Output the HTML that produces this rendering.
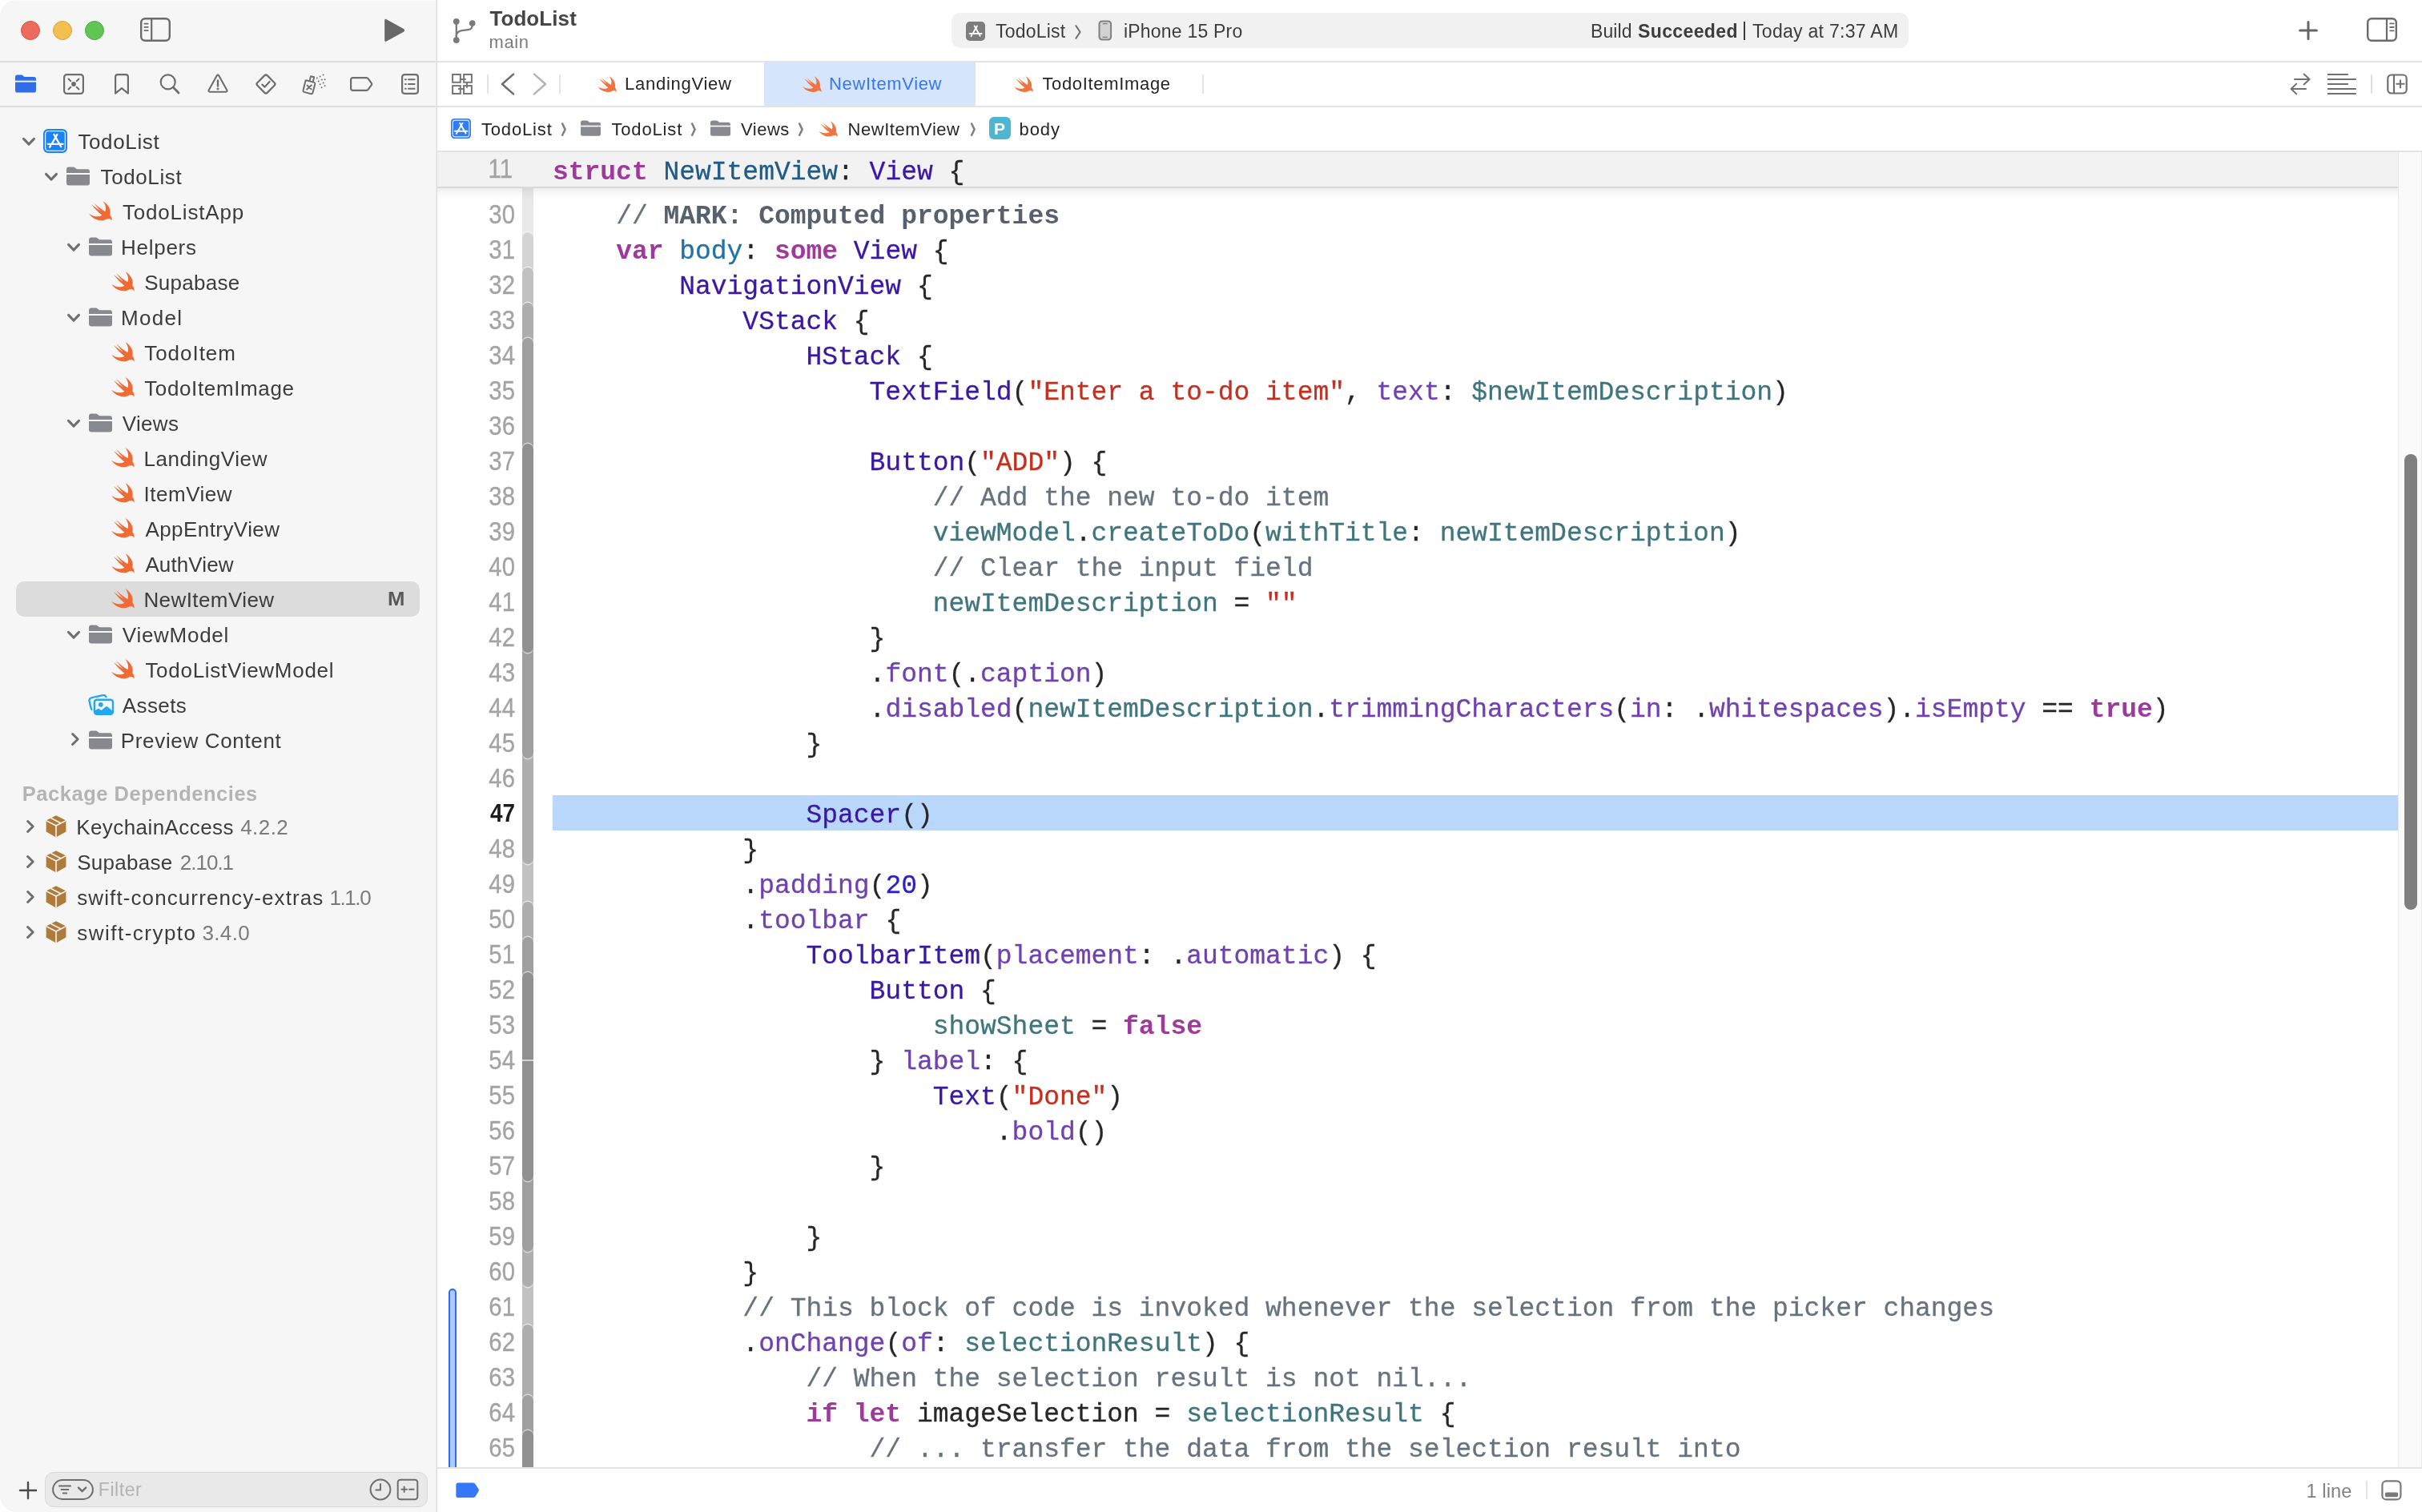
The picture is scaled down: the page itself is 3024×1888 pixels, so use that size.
<!DOCTYPE html><html lang="en"><head><meta charset="utf-8"><title>TodoList — NewItemView.swift</title><style>
*{box-sizing:border-box;margin:0;padding:0}
html,body{width:3024px;height:1888px;background:#fff}
body{font-family:"Liberation Sans",sans-serif;color:#3a3a3a;position:relative}
.a{position:absolute}
.t{white-space:pre;line-height:1}
#side{left:0;top:0;width:544px;height:1888px;background:#f6f6f6;border-radius:20px 0 0 20px}
#sdiv{left:544px;top:0;width:2px;height:1888px;background:linear-gradient(90deg,#ebebeb 50%,#dedede 50%)}
.hl{height:2px;background:#e3e3e3}
.sb{font-size:26px;color:#3c3c3c}
.ver{color:#7b7b7b}
.tab{font-size:22px;color:#262626}
.jb{font-size:22px;color:#262626}
.tb{font-size:23px;color:#3c3c3c}
.code{font-family:"Liberation Mono",monospace;font-size:33px;letter-spacing:-0.024px;color:#262626;-webkit-text-stroke:0.3px;height:44px;line-height:44px;left:690px}
.ln{font-family:"Liberation Sans",sans-serif;font-size:32.6px;transform:scaleX(.9);transform-origin:100% 50%;-webkit-text-stroke:0.35px;color:#a3a3a3;height:44px;line-height:44px;left:560px;width:83px;text-align:right}
.k{color:#9e3a9c;font-weight:bold;-webkit-text-stroke:0}.ty{color:#1f5b85}.d{color:#2272a6}.s{color:#3b18a4}.f{color:#7042af}
.p{color:#3f757d}.st{color:#c4301f}.n{color:#2a1fd0}.c{color:#65737f}.m{color:#56616d;font-weight:bold;-webkit-text-stroke:0}
</style></head><body><div id="win" class="a" style="left:0;top:0;width:3024px;height:1888px;overflow:hidden;will-change:transform">
<div id="side" class="a"></div><div id="sdiv" class="a"></div>
<div class="a" style="left:20px;top:0;width:524px;height:1px;background:#fbfbfb"></div>
<div class="a" style="left:26px;top:26px;width:24px;height:24px;border-radius:50%;background:#ed6a5e;border:1px solid #d5544a"></div>
<div class="a" style="left:66px;top:26px;width:24px;height:24px;border-radius:50%;background:#f5bf4f;border:1px solid #d9a33b"></div>
<div class="a" style="left:106px;top:26px;width:24px;height:24px;border-radius:50%;background:#61c554;border:1px solid #4faa42"></div>
<svg class="a" style="left:174px;top:21px" width="40" height="32" viewBox="0 0 40 32" ><rect x="2.2" y="2.2" width="35.6" height="27.6" rx="5" fill="none" stroke="#6b6b6b" stroke-width="2.4"/><path d="M15.2 2V30" stroke="#6b6b6b" stroke-width="2.2"/><path d="M6.4 8.6H10.8M6.4 12.9H10.8M6.4 17.2H10.8" stroke="#6b6b6b" stroke-width="1.7" stroke-linecap="round"/></svg>
<svg class="a" style="left:478px;top:22px" width="30" height="32" viewBox="0 0 30 32" ><path d="M2.2 3.6Q2.2 1 4.6 2.3L26 14Q28.4 15.9 26 17.8L4.6 29.6Q2.2 30.8 2.2 28.2Z" fill="#686868"/></svg>
<div class="a hl" style="left:0;top:76px;width:544px;background:#dcdcdc"></div>
<div class="a hl" style="left:0;top:132px;width:544px;background:#dcdcdc"></div>
<svg class="a" style="left:19px;top:93px" width="26" height="23" viewBox="0 0 29 24" preserveAspectRatio="none"><path fill="#2f6ee8" d="M0 3.6Q0 0.6 3 0.6H8.2Q9.8 0.6 10.9 1.6L12 2.6Q12.8 3.2 14 3.2H26Q29 3.2 29 6.2V20.6Q29 23.6 26 23.6H3Q0 23.6 0 20.6Z"/><rect x="0" y="8" width="29" height="2" fill="#f6f6f6"/></svg>
<svg class="a" style="left:79px;top:92px" width="26" height="26" viewBox="0 0 26 26" ><rect x="1.1" y="1.1" width="23.8" height="23.8" rx="3.5" fill="none" stroke="#6e6e6e" stroke-width="2.2"/><circle cx="13" cy="13" r="2.9" fill="#6e6e6e"/><path d="M6.5 6.5L9.3 9.3M19.5 6.5L16.7 9.3M6.5 19.5L9.3 16.7M19.5 19.5L16.7 16.7" stroke="#6e6e6e" stroke-width="2" stroke-linecap="round"/></svg>
<svg class="a" style="left:143px;top:92px" width="18" height="26" viewBox="0 0 18 26" ><path d="M1.1 4Q1.1 1.1 4 1.1H14Q16.9 1.1 16.9 4V24.6L9 18.2L1.1 24.6Z" fill="none" stroke="#6e6e6e" stroke-width="2.2" stroke-linejoin="round"/></svg>
<svg class="a" style="left:199px;top:92px" width="26" height="26" viewBox="0 0 26 26" ><circle cx="10.7" cy="10.4" r="9" fill="none" stroke="#6e6e6e" stroke-width="2.2"/><path d="M17.2 17L24 24" stroke="#6e6e6e" stroke-width="2.8" stroke-linecap="round"/></svg>
<svg class="a" style="left:259px;top:91px" width="26" height="26" viewBox="0 0 26 26" ><path d="M13 2.6Q13.8 2.6 14.3 3.5L24.3 21.4Q25.2 23.6 23 23.8H3Q0.8 23.6 1.7 21.4L11.7 3.5Q12.2 2.6 13 2.6Z" fill="none" stroke="#6e6e6e" stroke-width="2.1" stroke-linejoin="round"/><path d="M13 9.5V16.4" stroke="#6e6e6e" stroke-width="2.4" stroke-linecap="round"/><circle cx="13" cy="20" r="1.4" fill="#6e6e6e"/></svg>
<svg class="a" style="left:318px;top:91px" width="28" height="28" viewBox="0 0 28 28" ><rect x="5.2" y="5.2" width="17.6" height="17.6" rx="2.6" transform="rotate(45 14 14)" fill="none" stroke="#6e6e6e" stroke-width="2.2"/><path d="M9.4 14.6L12.6 17.6L18.6 11" fill="none" stroke="#6e6e6e" stroke-width="2.2" stroke-linecap="round" stroke-linejoin="round"/></svg>
<svg class="a" style="left:377px;top:91px" width="32" height="29" viewBox="0 0 32 29" ><g fill="none" stroke="#6e6e6e" stroke-width="2" stroke-linejoin="round"><path d="M5.2 9.3L15.2 11.9Q16.6 12.4 16.3 13.9L13.4 25.1Q12.9 26.5 11.5 26.2L2.6 23.9Q1.2 23.4 1.5 22L4.3 10.5Q4.5 9.2 5.2 9.3Z"/><path d="M9.6 9.8L11 4.2L15.2 5.3L13.8 10.9"/><path d="M6.6 15.6L11.6 20.4M11.8 15.4L6.2 20.6" stroke-linecap="round"/></g><g fill="#6e6e6e"><circle cx="18.8" cy="6.6" r="1"/><circle cx="22.6" cy="4.6" r="1"/><circle cx="26.6" cy="2.6" r="1"/><circle cx="20.8" cy="10.6" r="1"/><circle cx="24.8" cy="8.6" r="1"/><circle cx="28.6" cy="8.2" r="1"/><circle cx="22.6" cy="14.2" r="1"/><circle cx="26.6" cy="12.6" r="1"/><circle cx="24.6" cy="18.2" r="1"/><circle cx="28.6" cy="16.2" r="1"/></g></svg>
<svg class="a" style="left:436px;top:95px" width="32" height="20" viewBox="0 0 32 20" ><path d="M4.6 2.1H21.4Q22.9 2.1 23.8 3.4L28 9.2Q28.5 10 28 10.8L23.8 16.6Q22.9 17.9 21.4 17.9H4.6Q2.1 17.9 2.1 15.4V4.6Q2.1 2.1 4.6 2.1Z" fill="none" stroke="#6e6e6e" stroke-width="2.2" stroke-linejoin="round"/></svg>
<svg class="a" style="left:500px;top:92px" width="24" height="26" viewBox="0 0 24 26" ><rect x="2.1" y="1.2" width="19.8" height="23.6" rx="3" fill="none" stroke="#6e6e6e" stroke-width="2.2"/><path d="M10 7.2H17.6M10 13H17.6M10 18.8H17.6" stroke="#6e6e6e" stroke-width="2" stroke-linecap="round"/><path d="M6 7.2H6.8M6 13H6.8M6 18.8H6.8" stroke="#6e6e6e" stroke-width="2" stroke-linecap="round"/></svg>
<svg class="a" style="left:27px;top:171px" width="18" height="12" viewBox="0 0 18 12" ><path d="M2.5 2.4L9 9.1L15.5 2.4" fill="none" stroke="#6e6e6e" stroke-width="3" stroke-linecap="round" stroke-linejoin="round"/></svg>
<svg class="a" style="left:54px;top:161px" width="30" height="30" viewBox="0 0 30 30" ><rect x="0" y="0" width="30" height="30" rx="6" fill="#1a82fb"/><rect x="2.6" y="2.6" width="24.8" height="24.8" rx="4" fill="none" stroke="#fff" stroke-width="1.4" opacity="0.85"/><g stroke="#fff" stroke-width="2.3" stroke-linecap="round" fill="none"><path d="M17.4 6.9L10.6 18.7"/><path d="M13.4 6.9L22.2 22.3"/><path d="M5.8 18.8H24.6"/><path d="M9.2 20.9L8.1 22.7"/></g></svg>
<div id="sb0" class="a t sb" style="left:97.40px;top:164px;letter-spacing:0.629px;">TodoList</div>
<svg class="a" style="left:55px;top:215px" width="18" height="12" viewBox="0 0 18 12" ><path d="M2.5 2.4L9 9.1L15.5 2.4" fill="none" stroke="#6e6e6e" stroke-width="3" stroke-linecap="round" stroke-linejoin="round"/></svg>
<svg class="a" style="left:83px;top:208px" width="29" height="24" viewBox="0 0 29 24" preserveAspectRatio="none"><path fill="#868a8f" d="M0 3.6Q0 0.6 3 0.6H8.2Q9.8 0.6 10.9 1.6L12 2.6Q12.8 3.2 14 3.2H26Q29 3.2 29 6.2V20.6Q29 23.6 26 23.6H3Q0 23.6 0 20.6Z"/><rect x="0" y="8" width="29" height="2" fill="#f6f6f6"/></svg>
<div id="sb1" class="a t sb" style="left:125.60px;top:208px;letter-spacing:0.600px;">TodoList</div>
<svg class="a" style="left:111px;top:251px;opacity:1" width="29" height="25" viewBox="2.35 3.3 18.4 16.7" preserveAspectRatio="none"><path fill="#f06a35" d="M13.543 3.41c4.114 2.47 6.545 7.162 5.549 11.131-.024.093-.05.181-.076.272l.002.001c2.062 2.538 1.5 5.258 1.236 4.745-1.072-2.086-3.066-1.568-4.088-1.043a6.803 6.803 0 0 1-.281.158l-.02.012-.002.002c-2.115 1.123-4.957 1.205-7.812-.022a12.568 12.568 0 0 1-5.64-4.838c.649.48 1.35.902 2.097 1.252 3.019 1.414 6.051 1.311 8.197-.002C9.651 12.73 7.101 9.67 5.146 7.191a10.628 10.628 0 0 1-1.005-1.384c2.34 2.142 6.038 4.83 7.365 5.576C8.69 8.408 6.208 4.743 6.324 4.86c4.436 4.47 8.528 6.996 8.528 6.996.154.085.27.154.36.213.085-.215.16-.437.224-.668.708-2.588-.09-5.548-1.893-7.992z"/></svg>
<div id="sb2" class="a t sb" style="left:153.00px;top:252px;letter-spacing:0.800px;">TodoListApp</div>
<svg class="a" style="left:83px;top:303px" width="18" height="12" viewBox="0 0 18 12" ><path d="M2.5 2.4L9 9.1L15.5 2.4" fill="none" stroke="#6e6e6e" stroke-width="3" stroke-linecap="round" stroke-linejoin="round"/></svg>
<svg class="a" style="left:111px;top:296px" width="29" height="24" viewBox="0 0 29 24" preserveAspectRatio="none"><path fill="#868a8f" d="M0 3.6Q0 0.6 3 0.6H8.2Q9.8 0.6 10.9 1.6L12 2.6Q12.8 3.2 14 3.2H26Q29 3.2 29 6.2V20.6Q29 23.6 26 23.6H3Q0 23.6 0 20.6Z"/><rect x="0" y="8" width="29" height="2" fill="#f6f6f6"/></svg>
<div id="sb3" class="a t sb" style="left:151.00px;top:296px;letter-spacing:0.733px;">Helpers</div>
<svg class="a" style="left:139px;top:339px;opacity:1" width="29" height="25" viewBox="2.35 3.3 18.4 16.7" preserveAspectRatio="none"><path fill="#f06a35" d="M13.543 3.41c4.114 2.47 6.545 7.162 5.549 11.131-.024.093-.05.181-.076.272l.002.001c2.062 2.538 1.5 5.258 1.236 4.745-1.072-2.086-3.066-1.568-4.088-1.043a6.803 6.803 0 0 1-.281.158l-.02.012-.002.002c-2.115 1.123-4.957 1.205-7.812-.022a12.568 12.568 0 0 1-5.64-4.838c.649.48 1.35.902 2.097 1.252 3.019 1.414 6.051 1.311 8.197-.002C9.651 12.73 7.101 9.67 5.146 7.191a10.628 10.628 0 0 1-1.005-1.384c2.34 2.142 6.038 4.83 7.365 5.576C8.69 8.408 6.208 4.743 6.324 4.86c4.436 4.47 8.528 6.996 8.528 6.996.154.085.27.154.36.213.085-.215.16-.437.224-.668.708-2.588-.09-5.548-1.893-7.992z"/></svg>
<div id="sb4" class="a t sb" style="left:180.20px;top:340px;letter-spacing:0.286px;">Supabase</div>
<svg class="a" style="left:83px;top:391px" width="18" height="12" viewBox="0 0 18 12" ><path d="M2.5 2.4L9 9.1L15.5 2.4" fill="none" stroke="#6e6e6e" stroke-width="3" stroke-linecap="round" stroke-linejoin="round"/></svg>
<svg class="a" style="left:111px;top:384px" width="29" height="24" viewBox="0 0 29 24" preserveAspectRatio="none"><path fill="#868a8f" d="M0 3.6Q0 0.6 3 0.6H8.2Q9.8 0.6 10.9 1.6L12 2.6Q12.8 3.2 14 3.2H26Q29 3.2 29 6.2V20.6Q29 23.6 26 23.6H3Q0 23.6 0 20.6Z"/><rect x="0" y="8" width="29" height="2" fill="#f6f6f6"/></svg>
<div id="sb5" class="a t sb" style="left:151.00px;top:384px;letter-spacing:1.300px;">Model</div>
<svg class="a" style="left:139px;top:427px;opacity:1" width="29" height="25" viewBox="2.35 3.3 18.4 16.7" preserveAspectRatio="none"><path fill="#f06a35" d="M13.543 3.41c4.114 2.47 6.545 7.162 5.549 11.131-.024.093-.05.181-.076.272l.002.001c2.062 2.538 1.5 5.258 1.236 4.745-1.072-2.086-3.066-1.568-4.088-1.043a6.803 6.803 0 0 1-.281.158l-.02.012-.002.002c-2.115 1.123-4.957 1.205-7.812-.022a12.568 12.568 0 0 1-5.64-4.838c.649.48 1.35.902 2.097 1.252 3.019 1.414 6.051 1.311 8.197-.002C9.651 12.73 7.101 9.67 5.146 7.191a10.628 10.628 0 0 1-1.005-1.384c2.34 2.142 6.038 4.83 7.365 5.576C8.69 8.408 6.208 4.743 6.324 4.86c4.436 4.47 8.528 6.996 8.528 6.996.154.085.27.154.36.213.085-.215.16-.437.224-.668.708-2.588-.09-5.548-1.893-7.992z"/></svg>
<div id="sb6" class="a t sb" style="left:180.20px;top:428px;letter-spacing:0.971px;">TodoItem</div>
<svg class="a" style="left:139px;top:471px;opacity:1" width="29" height="25" viewBox="2.35 3.3 18.4 16.7" preserveAspectRatio="none"><path fill="#f06a35" d="M13.543 3.41c4.114 2.47 6.545 7.162 5.549 11.131-.024.093-.05.181-.076.272l.002.001c2.062 2.538 1.5 5.258 1.236 4.745-1.072-2.086-3.066-1.568-4.088-1.043a6.803 6.803 0 0 1-.281.158l-.02.012-.002.002c-2.115 1.123-4.957 1.205-7.812-.022a12.568 12.568 0 0 1-5.64-4.838c.649.48 1.35.902 2.097 1.252 3.019 1.414 6.051 1.311 8.197-.002C9.651 12.73 7.101 9.67 5.146 7.191a10.628 10.628 0 0 1-1.005-1.384c2.34 2.142 6.038 4.83 7.365 5.576C8.69 8.408 6.208 4.743 6.324 4.86c4.436 4.47 8.528 6.996 8.528 6.996.154.085.27.154.36.213.085-.215.16-.437.224-.668.708-2.588-.09-5.548-1.893-7.992z"/></svg>
<div id="sb7" class="a t sb" style="left:180.20px;top:472px;letter-spacing:0.633px;">TodoItemImage</div>
<svg class="a" style="left:83px;top:523px" width="18" height="12" viewBox="0 0 18 12" ><path d="M2.5 2.4L9 9.1L15.5 2.4" fill="none" stroke="#6e6e6e" stroke-width="3" stroke-linecap="round" stroke-linejoin="round"/></svg>
<svg class="a" style="left:111px;top:516px" width="29" height="24" viewBox="0 0 29 24" preserveAspectRatio="none"><path fill="#868a8f" d="M0 3.6Q0 0.6 3 0.6H8.2Q9.8 0.6 10.9 1.6L12 2.6Q12.8 3.2 14 3.2H26Q29 3.2 29 6.2V20.6Q29 23.6 26 23.6H3Q0 23.6 0 20.6Z"/><rect x="0" y="8" width="29" height="2" fill="#f6f6f6"/></svg>
<div id="sb8" class="a t sb" style="left:152.80px;top:516px;letter-spacing:0.300px;">Views</div>
<svg class="a" style="left:139px;top:559px;opacity:1" width="29" height="25" viewBox="2.35 3.3 18.4 16.7" preserveAspectRatio="none"><path fill="#f06a35" d="M13.543 3.41c4.114 2.47 6.545 7.162 5.549 11.131-.024.093-.05.181-.076.272l.002.001c2.062 2.538 1.5 5.258 1.236 4.745-1.072-2.086-3.066-1.568-4.088-1.043a6.803 6.803 0 0 1-.281.158l-.02.012-.002.002c-2.115 1.123-4.957 1.205-7.812-.022a12.568 12.568 0 0 1-5.64-4.838c.649.48 1.35.902 2.097 1.252 3.019 1.414 6.051 1.311 8.197-.002C9.651 12.73 7.101 9.67 5.146 7.191a10.628 10.628 0 0 1-1.005-1.384c2.34 2.142 6.038 4.83 7.365 5.576C8.69 8.408 6.208 4.743 6.324 4.86c4.436 4.47 8.528 6.996 8.528 6.996.154.085.27.154.36.213.085-.215.16-.437.224-.668.708-2.588-.09-5.548-1.893-7.992z"/></svg>
<div id="sb9" class="a t sb" style="left:179.40px;top:560px;letter-spacing:0.560px;">LandingView</div>
<svg class="a" style="left:139px;top:603px;opacity:1" width="29" height="25" viewBox="2.35 3.3 18.4 16.7" preserveAspectRatio="none"><path fill="#f06a35" d="M13.543 3.41c4.114 2.47 6.545 7.162 5.549 11.131-.024.093-.05.181-.076.272l.002.001c2.062 2.538 1.5 5.258 1.236 4.745-1.072-2.086-3.066-1.568-4.088-1.043a6.803 6.803 0 0 1-.281.158l-.02.012-.002.002c-2.115 1.123-4.957 1.205-7.812-.022a12.568 12.568 0 0 1-5.64-4.838c.649.48 1.35.902 2.097 1.252 3.019 1.414 6.051 1.311 8.197-.002C9.651 12.73 7.101 9.67 5.146 7.191a10.628 10.628 0 0 1-1.005-1.384c2.34 2.142 6.038 4.83 7.365 5.576C8.69 8.408 6.208 4.743 6.324 4.86c4.436 4.47 8.528 6.996 8.528 6.996.154.085.27.154.36.213.085-.215.16-.437.224-.668.708-2.588-.09-5.548-1.893-7.992z"/></svg>
<div id="sb10" class="a t sb" style="left:179.40px;top:604px;letter-spacing:0.543px;">ItemView</div>
<svg class="a" style="left:139px;top:647px;opacity:1" width="29" height="25" viewBox="2.35 3.3 18.4 16.7" preserveAspectRatio="none"><path fill="#f06a35" d="M13.543 3.41c4.114 2.47 6.545 7.162 5.549 11.131-.024.093-.05.181-.076.272l.002.001c2.062 2.538 1.5 5.258 1.236 4.745-1.072-2.086-3.066-1.568-4.088-1.043a6.803 6.803 0 0 1-.281.158l-.02.012-.002.002c-2.115 1.123-4.957 1.205-7.812-.022a12.568 12.568 0 0 1-5.64-4.838c.649.48 1.35.902 2.097 1.252 3.019 1.414 6.051 1.311 8.197-.002C9.651 12.73 7.101 9.67 5.146 7.191a10.628 10.628 0 0 1-1.005-1.384c2.34 2.142 6.038 4.83 7.365 5.576C8.69 8.408 6.208 4.743 6.324 4.86c4.436 4.47 8.528 6.996 8.528 6.996.154.085.27.154.36.213.085-.215.16-.437.224-.668.708-2.588-.09-5.548-1.893-7.992z"/></svg>
<div id="sb11" class="a t sb" style="left:181.40px;top:648px;letter-spacing:0.436px;">AppEntryView</div>
<svg class="a" style="left:139px;top:691px;opacity:1" width="29" height="25" viewBox="2.35 3.3 18.4 16.7" preserveAspectRatio="none"><path fill="#f06a35" d="M13.543 3.41c4.114 2.47 6.545 7.162 5.549 11.131-.024.093-.05.181-.076.272l.002.001c2.062 2.538 1.5 5.258 1.236 4.745-1.072-2.086-3.066-1.568-4.088-1.043a6.803 6.803 0 0 1-.281.158l-.02.012-.002.002c-2.115 1.123-4.957 1.205-7.812-.022a12.568 12.568 0 0 1-5.64-4.838c.649.48 1.35.902 2.097 1.252 3.019 1.414 6.051 1.311 8.197-.002C9.651 12.73 7.101 9.67 5.146 7.191a10.628 10.628 0 0 1-1.005-1.384c2.34 2.142 6.038 4.83 7.365 5.576C8.69 8.408 6.208 4.743 6.324 4.86c4.436 4.47 8.528 6.996 8.528 6.996.154.085.27.154.36.213.085-.215.16-.437.224-.668.708-2.588-.09-5.548-1.893-7.992z"/></svg>
<div id="sb12" class="a t sb" style="left:181.40px;top:692px;letter-spacing:0.114px;">AuthView</div>
<div class="a" style="left:20px;top:726px;width:504px;height:44px;border-radius:10px;background:#dcdcdc"></div>
<div id="sbM" class="a t " style="left:484.40px;top:736.8px;font-weight:bold;font-size:23px;color:#5a5a5a;transform:scaleX(1.12);transform-origin:0 0">M</div>
<svg class="a" style="left:139px;top:735px;opacity:1" width="29" height="25" viewBox="2.35 3.3 18.4 16.7" preserveAspectRatio="none"><path fill="#f06a35" d="M13.543 3.41c4.114 2.47 6.545 7.162 5.549 11.131-.024.093-.05.181-.076.272l.002.001c2.062 2.538 1.5 5.258 1.236 4.745-1.072-2.086-3.066-1.568-4.088-1.043a6.803 6.803 0 0 1-.281.158l-.02.012-.002.002c-2.115 1.123-4.957 1.205-7.812-.022a12.568 12.568 0 0 1-5.64-4.838c.649.48 1.35.902 2.097 1.252 3.019 1.414 6.051 1.311 8.197-.002C9.651 12.73 7.101 9.67 5.146 7.191a10.628 10.628 0 0 1-1.005-1.384c2.34 2.142 6.038 4.83 7.365 5.576C8.69 8.408 6.208 4.743 6.324 4.86c4.436 4.47 8.528 6.996 8.528 6.996.154.085.27.154.36.213.085-.215.16-.437.224-.668.708-2.588-.09-5.548-1.893-7.992z"/></svg>
<div id="sb13" class="a t sb" style="left:179.40px;top:736px;letter-spacing:0.420px;">NewItemView</div>
<svg class="a" style="left:83px;top:787px" width="18" height="12" viewBox="0 0 18 12" ><path d="M2.5 2.4L9 9.1L15.5 2.4" fill="none" stroke="#6e6e6e" stroke-width="3" stroke-linecap="round" stroke-linejoin="round"/></svg>
<svg class="a" style="left:111px;top:780px" width="29" height="24" viewBox="0 0 29 24" preserveAspectRatio="none"><path fill="#868a8f" d="M0 3.6Q0 0.6 3 0.6H8.2Q9.8 0.6 10.9 1.6L12 2.6Q12.8 3.2 14 3.2H26Q29 3.2 29 6.2V20.6Q29 23.6 26 23.6H3Q0 23.6 0 20.6Z"/><rect x="0" y="8" width="29" height="2" fill="#f6f6f6"/></svg>
<div id="sb14" class="a t sb" style="left:152.80px;top:780px;letter-spacing:0.725px;">ViewModel</div>
<svg class="a" style="left:139px;top:823px;opacity:1" width="29" height="25" viewBox="2.35 3.3 18.4 16.7" preserveAspectRatio="none"><path fill="#f06a35" d="M13.543 3.41c4.114 2.47 6.545 7.162 5.549 11.131-.024.093-.05.181-.076.272l.002.001c2.062 2.538 1.5 5.258 1.236 4.745-1.072-2.086-3.066-1.568-4.088-1.043a6.803 6.803 0 0 1-.281.158l-.02.012-.002.002c-2.115 1.123-4.957 1.205-7.812-.022a12.568 12.568 0 0 1-5.64-4.838c.649.48 1.35.902 2.097 1.252 3.019 1.414 6.051 1.311 8.197-.002C9.651 12.73 7.101 9.67 5.146 7.191a10.628 10.628 0 0 1-1.005-1.384c2.34 2.142 6.038 4.83 7.365 5.576C8.69 8.408 6.208 4.743 6.324 4.86c4.436 4.47 8.528 6.996 8.528 6.996.154.085.27.154.36.213.085-.215.16-.437.224-.668.708-2.588-.09-5.548-1.893-7.992z"/></svg>
<div id="sb15" class="a t sb" style="left:181.40px;top:824px;letter-spacing:0.725px;">TodoListViewModel</div>
<svg class="a" style="left:110px;top:867px" width="34" height="28" viewBox="0 0 34 28" ><rect x="2.3" y="2.55" width="21.4" height="15.3" rx="3.2" fill="none" stroke="#1fa8f5" stroke-width="2.4" transform="rotate(-12.6 13 10.2)"/><rect x="5.2" y="4.1" width="28.5" height="23.4" rx="4.6" fill="#f6f6f6"/><rect x="7.9" y="6.8" width="23.1" height="18" rx="3" fill="#f6f6f6" stroke="#1fa8f5" stroke-width="2.4"/><circle cx="15.8" cy="12.8" r="2.9" fill="#1fa8f5"/><path d="M8.7 20.6L12.2 17.9Q12.9 17.4 13.6 17.9L16.4 19.9L22.4 15.2Q23.2 14.6 24 15.2L30.2 20.6V24.2H8.7Z" fill="#1fa8f5"/></svg>
<div id="sb16" class="a t sb" style="left:152.80px;top:868px;letter-spacing:0.400px;">Assets</div>
<svg class="a" style="left:88px;top:914.4px" width="12" height="18" viewBox="0 0 12 18" ><path d="M2.6 2.5L9.2 9L2.6 15.5" fill="none" stroke="#6e6e6e" stroke-width="3" stroke-linecap="round" stroke-linejoin="round"/></svg>
<svg class="a" style="left:111px;top:912px" width="29" height="24" viewBox="0 0 29 24" preserveAspectRatio="none"><path fill="#868a8f" d="M0 3.6Q0 0.6 3 0.6H8.2Q9.8 0.6 10.9 1.6L12 2.6Q12.8 3.2 14 3.2H26Q29 3.2 29 6.2V20.6Q29 23.6 26 23.6H3Q0 23.6 0 20.6Z"/><rect x="0" y="8" width="29" height="2" fill="#f6f6f6"/></svg>
<div id="sb17" class="a t sb" style="left:150.80px;top:912px;letter-spacing:0.657px;">Preview Content</div>
<div id="pkgh" class="a t " style="left:27.80px;top:979px;letter-spacing:0.526px;font-size:25.5px;font-weight:bold;color:#b4b4b4">Package Dependencies</div>
<svg class="a" style="left:32px;top:1022.5px" width="12" height="18" viewBox="0 0 12 18" ><path d="M2.6 2.5L9.2 9L2.6 15.5" fill="none" stroke="#6e6e6e" stroke-width="3" stroke-linecap="round" stroke-linejoin="round"/></svg>
<svg class="a" style="left:56px;top:1017px" width="28" height="30" viewBox="0 0 28 30" ><path d="M14 1.2L26.4 7.6V21.6L14 28.4L1.6 21.6V7.6Z" fill="#b07b3a"/><path d="M1.6 7.6L14 14L26.4 7.6M14 14V28.4" fill="none" stroke="#f6f6f6" stroke-width="1.6"/><path d="M7.6 4.5L20.2 11" fill="none" stroke="#f6f6f6" stroke-width="1.6"/></svg>
<div id="pk0" class="a t sb" style="left:95.20px;top:1019.6px;letter-spacing:0.431px;">KeychainAccess</div>
<div id="pv0" class="a t sb ver" style="left:300.20px;top:1019.6px;letter-spacing:0.450px;">4.2.2</div>
<svg class="a" style="left:32px;top:1066.5px" width="12" height="18" viewBox="0 0 12 18" ><path d="M2.6 2.5L9.2 9L2.6 15.5" fill="none" stroke="#6e6e6e" stroke-width="3" stroke-linecap="round" stroke-linejoin="round"/></svg>
<svg class="a" style="left:56px;top:1061px" width="28" height="30" viewBox="0 0 28 30" ><path d="M14 1.2L26.4 7.6V21.6L14 28.4L1.6 21.6V7.6Z" fill="#b07b3a"/><path d="M1.6 7.6L14 14L26.4 7.6M14 14V28.4" fill="none" stroke="#f6f6f6" stroke-width="1.6"/><path d="M7.6 4.5L20.2 11" fill="none" stroke="#f6f6f6" stroke-width="1.6"/></svg>
<div id="pk1" class="a t sb" style="left:96.20px;top:1063.6px;letter-spacing:0.286px;">Supabase</div>
<div id="pv1" class="a t sb ver" style="left:224.80px;top:1063.6px;letter-spacing:-1.000px;">2.10.1</div>
<svg class="a" style="left:32px;top:1110.5px" width="12" height="18" viewBox="0 0 12 18" ><path d="M2.6 2.5L9.2 9L2.6 15.5" fill="none" stroke="#6e6e6e" stroke-width="3" stroke-linecap="round" stroke-linejoin="round"/></svg>
<svg class="a" style="left:56px;top:1105px" width="28" height="30" viewBox="0 0 28 30" ><path d="M14 1.2L26.4 7.6V21.6L14 28.4L1.6 21.6V7.6Z" fill="#b07b3a"/><path d="M1.6 7.6L14 14L26.4 7.6M14 14V28.4" fill="none" stroke="#f6f6f6" stroke-width="1.6"/><path d="M7.6 4.5L20.2 11" fill="none" stroke="#f6f6f6" stroke-width="1.6"/></svg>
<div id="pk2" class="a t sb" style="left:96.20px;top:1107.6px;letter-spacing:1.104px;">swift-concurrency-extras</div>
<div id="pv2" class="a t sb ver" style="left:411.40px;top:1107.6px;letter-spacing:-1.400px;">1.1.0</div>
<svg class="a" style="left:32px;top:1154.5px" width="12" height="18" viewBox="0 0 12 18" ><path d="M2.6 2.5L9.2 9L2.6 15.5" fill="none" stroke="#6e6e6e" stroke-width="3" stroke-linecap="round" stroke-linejoin="round"/></svg>
<svg class="a" style="left:56px;top:1149px" width="28" height="30" viewBox="0 0 28 30" ><path d="M14 1.2L26.4 7.6V21.6L14 28.4L1.6 21.6V7.6Z" fill="#b07b3a"/><path d="M1.6 7.6L14 14L26.4 7.6M14 14V28.4" fill="none" stroke="#f6f6f6" stroke-width="1.6"/><path d="M7.6 4.5L20.2 11" fill="none" stroke="#f6f6f6" stroke-width="1.6"/></svg>
<div id="pk3" class="a t sb" style="left:96.20px;top:1151.6px;letter-spacing:1.491px;">swift-crypto</div>
<div id="pv3" class="a t sb ver" style="left:252.40px;top:1151.6px;letter-spacing:0.400px;">3.4.0</div>
<svg class="a" style="left:22px;top:1848px" width="26" height="26" viewBox="0 0 26 26" ><path d="M13 3V23M3 13H23" stroke="#4a4a4a" stroke-width="2.4" stroke-linecap="round"/></svg>
<div class="a" style="left:56px;top:1838px;width:478px;height:44px;border-radius:11px;background:#e9e9e9;border:1px solid #d9d9d9"></div>
<svg class="a" style="left:65px;top:1847px" width="52" height="26" viewBox="0 0 52 26" ><rect x="1.1" y="1.1" width="49.8" height="23.8" rx="11.9" fill="none" stroke="#6e6e6e" stroke-width="2"/><path d="M9 8.4H23M11.6 13H20.4M13.8 17.6H18.2" stroke="#6e6e6e" stroke-width="2" stroke-linecap="round"/><path d="M33 10.6L37.6 15.2L42.2 10.6" fill="none" stroke="#6e6e6e" stroke-width="2.4" stroke-linecap="round" stroke-linejoin="round"/></svg>
<div id="filter" class="a t " style="left:122.80px;top:1849px;letter-spacing:0.560px;font-size:23px;color:#b3b3b3">Filter</div>
<svg class="a" style="left:461px;top:1846px" width="28" height="28" viewBox="0 0 28 28" ><circle cx="14" cy="14" r="12.4" fill="none" stroke="#6e6e6e" stroke-width="2"/><path d="M14 7V14.6H8.4" fill="none" stroke="#6e6e6e" stroke-width="2" stroke-linecap="round" stroke-linejoin="round"/></svg>
<svg class="a" style="left:495px;top:1846px" width="28" height="28" viewBox="0 0 28 28" ><rect x="1.7" y="1.7" width="24.6" height="24.6" rx="3.2" fill="none" stroke="#6e6e6e" stroke-width="2"/><path d="M6.4 13.8H13M9.7 10.5V17.1M16 13.8H21.6" stroke="#6e6e6e" stroke-width="2" stroke-linecap="round"/></svg>
<div class="a hl" style="left:546px;top:76px;width:2478px"></div>
<svg class="a" style="left:564px;top:21px" width="32" height="34" viewBox="0 0 32 34" ><g fill="none" stroke="#7a7a7a" stroke-width="2.3" stroke-linecap="round"><path d="M5.8 6V28"/><path d="M25.7 8V10.5Q25.7 15.5 20.5 16.2L12.5 17.2Q5.8 18.4 5.8 24"/></g><circle cx="5.8" cy="5.8" r="3.9" fill="#7a7a7a"/><circle cx="5.8" cy="29.1" r="3.9" fill="#7a7a7a"/><circle cx="25.7" cy="8" r="3.8" fill="#7a7a7a"/></svg>
<div id="title" class="a t " style="left:611.40px;top:10px;letter-spacing:0.086px;font-size:26px;font-weight:bold;color:#464646">TodoList</div>
<div id="branch" class="a t " style="left:610.40px;top:41.5px;letter-spacing:0.667px;font-size:22px;color:#7c7c7c">main</div>
<div class="a" style="left:1188px;top:16px;width:1195px;height:44px;border-radius:11px;background:#f1f1f1"></div>
<svg class="a" style="left:1205.5px;top:26.5px" width="24" height="24" viewBox="0 0 30 30" ><rect x="0" y="0" width="30" height="30" rx="6" fill="#7d7d7d"/><g stroke="#fff" stroke-width="2.3" stroke-linecap="round" fill="none"><path d="M17.4 6.9L10.6 18.7"/><path d="M13.4 6.9L22.2 22.3"/><path d="M5.8 18.8H24.6"/><path d="M9.2 20.9L8.1 22.7"/></g></svg>
<div id="sch" class="a t tb" style="left:1243.00px;top:27.6px;letter-spacing:0.200px;">TodoList</div>
<svg class="a" style="left:1342px;top:31px" width="9" height="18" viewBox="0 0 9 18" ><path d="M1.4 1.2L6.6 9L1.4 16.8" fill="none" stroke="#6a6a6a" stroke-width="2" stroke-linecap="round" stroke-linejoin="round"/></svg>
<svg class="a" style="left:1371px;top:25px" width="18" height="26" viewBox="0 0 18 26" ><rect x="1.5" y="1.5" width="14.6" height="23" rx="3.4" fill="#d2d2d2" stroke="#808080" stroke-width="2"/><path d="M6.4 4.6H11.2M6.2 21.4H11.4" stroke="#808080" stroke-width="1.4" stroke-linecap="round"/></svg>
<div id="dev" class="a t tb" style="left:1403.00px;top:27.6px;letter-spacing:0.200px;">iPhone 15 Pro</div>
<div id="bld1" class="a t tb" style="left:1986.00px;top:27.6px;letter-spacing:0.100px;">Build</div>
<div id="bld2" class="a t tb" style="left:2045.00px;top:27.6px;letter-spacing:0.375px;font-weight:bold">Succeeded</div>
<div class="a" style="left:2177px;top:27px;width:2px;height:23px;background:#3c3c3c"></div>
<div id="bld3" class="a t tb" style="left:2188.00px;top:27.6px;letter-spacing:0.293px;">Today at 7:37 AM</div>
<svg class="a" style="left:2868px;top:24px" width="28" height="28" viewBox="0 0 28 28" ><path d="M14 3.6V24.4M3.6 14H24.4" stroke="#666" stroke-width="3" stroke-linecap="round"/></svg>
<svg class="a" style="left:2954px;top:21px" width="40" height="32" viewBox="0 0 40 32" ><rect x="2.2" y="2.2" width="35.6" height="27.6" rx="5" fill="none" stroke="#6b6b6b" stroke-width="2.4"/><path d="M26 2V30" stroke="#6b6b6b" stroke-width="2.2"/><path d="M30.2 8.4H34.6M30.2 13H34.6M30.2 17.4H34.6" stroke="#6b6b6b" stroke-width="1.9" stroke-linecap="round"/></svg>
<div class="a hl" style="left:546px;top:132px;width:2478px"></div>
<svg class="a" style="left:564px;top:92px" width="27" height="27" viewBox="0 0 27 27" ><g fill="none" stroke="#767676" stroke-width="2"><rect x="1.1" y="1" width="9.7" height="9.8"/><rect x="15.1" y="1" width="9.8" height="9.8"/><rect x="1.1" y="15.1" width="9.7" height="9.9"/><rect x="15.1" y="15.1" width="9.8" height="9.9"/><path d="M10.8 7H17.7M19 10.8V17.7M8 19H15" /></g></svg>
<div class="a" style="left:608px;top:93px;width:2px;height:24px;background:#e3e3e3"></div>
<svg class="a" style="left:624px;top:90px" width="20" height="30" viewBox="0 0 20 30" ><path d="M17 2.6L3 15L17 27.4" fill="none" stroke="#6e6e6e" stroke-width="2.6" stroke-linecap="round" stroke-linejoin="round"/></svg>
<svg class="a" style="left:664px;top:90px" width="20" height="30" viewBox="0 0 20 30" ><path d="M3 2.6L17 15L3 27.4" fill="none" stroke="#b4b4b4" stroke-width="2.6" stroke-linecap="round" stroke-linejoin="round"/></svg>
<div class="a" style="left:698px;top:93px;width:2px;height:24px;background:#e3e3e3"></div>
<div class="a" style="left:954px;top:78px;width:264px;height:54px;background:#d6e5fb"></div>
<svg class="a" style="left:745.5px;top:95px;opacity:1" width="24" height="20.5" viewBox="2.35 3.3 18.4 16.7" preserveAspectRatio="none"><path fill="#f0743f" d="M13.543 3.41c4.114 2.47 6.545 7.162 5.549 11.131-.024.093-.05.181-.076.272l.002.001c2.062 2.538 1.5 5.258 1.236 4.745-1.072-2.086-3.066-1.568-4.088-1.043a6.803 6.803 0 0 1-.281.158l-.02.012-.002.002c-2.115 1.123-4.957 1.205-7.812-.022a12.568 12.568 0 0 1-5.64-4.838c.649.48 1.35.902 2.097 1.252 3.019 1.414 6.051 1.311 8.197-.002C9.651 12.73 7.101 9.67 5.146 7.191a10.628 10.628 0 0 1-1.005-1.384c2.34 2.142 6.038 4.83 7.365 5.576C8.69 8.408 6.208 4.743 6.324 4.86c4.436 4.47 8.528 6.996 8.528 6.996.154.085.27.154.36.213.085-.215.16-.437.224-.668.708-2.588-.09-5.548-1.893-7.992z"/></svg>
<div id="tab0" class="a t tab" style="left:780.00px;top:94.4px;letter-spacing:0.740px;">LandingView</div>
<svg class="a" style="left:1002px;top:95px;opacity:1" width="24" height="20.5" viewBox="2.35 3.3 18.4 16.7" preserveAspectRatio="none"><path fill="#f0743f" d="M13.543 3.41c4.114 2.47 6.545 7.162 5.549 11.131-.024.093-.05.181-.076.272l.002.001c2.062 2.538 1.5 5.258 1.236 4.745-1.072-2.086-3.066-1.568-4.088-1.043a6.803 6.803 0 0 1-.281.158l-.02.012-.002.002c-2.115 1.123-4.957 1.205-7.812-.022a12.568 12.568 0 0 1-5.64-4.838c.649.48 1.35.902 2.097 1.252 3.019 1.414 6.051 1.311 8.197-.002C9.651 12.73 7.101 9.67 5.146 7.191a10.628 10.628 0 0 1-1.005-1.384c2.34 2.142 6.038 4.83 7.365 5.576C8.69 8.408 6.208 4.743 6.324 4.86c4.436 4.47 8.528 6.996 8.528 6.996.154.085.27.154.36.213.085-.215.16-.437.224-.668.708-2.588-.09-5.548-1.893-7.992z"/></svg>
<div id="tab1" class="a t tab" style="left:1035.00px;top:94.4px;letter-spacing:0.640px;color:#3478f6">NewItemView</div>
<svg class="a" style="left:1265.5px;top:95px;opacity:1" width="24" height="20.5" viewBox="2.35 3.3 18.4 16.7" preserveAspectRatio="none"><path fill="#f0743f" d="M13.543 3.41c4.114 2.47 6.545 7.162 5.549 11.131-.024.093-.05.181-.076.272l.002.001c2.062 2.538 1.5 5.258 1.236 4.745-1.072-2.086-3.066-1.568-4.088-1.043a6.803 6.803 0 0 1-.281.158l-.02.012-.002.002c-2.115 1.123-4.957 1.205-7.812-.022a12.568 12.568 0 0 1-5.64-4.838c.649.48 1.35.902 2.097 1.252 3.019 1.414 6.051 1.311 8.197-.002C9.651 12.73 7.101 9.67 5.146 7.191a10.628 10.628 0 0 1-1.005-1.384c2.34 2.142 6.038 4.83 7.365 5.576C8.69 8.408 6.208 4.743 6.324 4.86c4.436 4.47 8.528 6.996 8.528 6.996.154.085.27.154.36.213.085-.215.16-.437.224-.668.708-2.588-.09-5.548-1.893-7.992z"/></svg>
<div id="tab2" class="a t tab" style="left:1301.40px;top:94.4px;letter-spacing:0.667px;">TodoItemImage</div>
<div class="a" style="left:1501px;top:93px;width:2px;height:24px;background:#e3e3e3"></div>
<svg class="a" style="left:2858px;top:90px" width="30" height="30" viewBox="0 0 30 30" ><g fill="none" stroke="#707070" stroke-width="2" stroke-linecap="round" stroke-linejoin="round"><path d="M7 9H25.4M18.6 2.6L25.6 9L18.6 15.4"/><path d="M21 21H3M9.2 14.6L2.6 21L9.2 27.4"/></g></svg>
<svg class="a" style="left:2905px;top:91px" width="38" height="28" viewBox="0 0 38 28" ><path d="M1 2H26.8M1 8H36.8M1 14H26.8M1 20H36.8M1 26H36.8" stroke="#707070" stroke-width="2"/></svg>
<div class="a" style="left:2960px;top:93px;width:2px;height:24px;background:#e0e0e0"></div>
<svg class="a" style="left:2979px;top:91px" width="28" height="28" viewBox="0 0 28 28" ><rect x="2.3" y="2.5" width="23.4" height="23" rx="4.4" fill="none" stroke="#707070" stroke-width="2.2"/><path d="M10 2.5V25.5" stroke="#707070" stroke-width="2.2"/><path d="M13.4 13.8H22.6M18 9.2V18.4" stroke="#707070" stroke-width="2" stroke-linecap="round"/></svg>
<div class="a hl" style="left:546px;top:188px;width:2478px"></div>
<svg class="a" style="left:563px;top:147.5px" width="25" height="25" viewBox="0 0 30 30" ><rect x="0" y="0" width="30" height="30" rx="5" fill="#2f7cf6"/><rect x="2.6" y="2.6" width="24.8" height="24.8" rx="4" fill="none" stroke="#fff" stroke-width="1.4" opacity="0.85"/><g stroke="#fff" stroke-width="2.3" stroke-linecap="round" fill="none"><path d="M17.4 6.9L10.6 18.7"/><path d="M13.4 6.9L22.2 22.3"/><path d="M5.8 18.8H24.6"/><path d="M9.2 20.9L8.1 22.7"/></g></svg>
<div id="jb0" class="a t jb" style="left:600.90px;top:150.7px;letter-spacing:0.857px;">TodoList</div>
<svg class="a" style="left:700px;top:152px" width="8" height="20" viewBox="0 0 8 20" ><path d="M1.7 1.5L5.6 9.6L1.7 17.7" fill="none" stroke="#808080" stroke-width="2.5" stroke-linecap="butt" stroke-linejoin="miter"/></svg>
<svg class="a" style="left:725px;top:150px" width="25" height="20" viewBox="0 0 29 24" preserveAspectRatio="none"><path fill="#868a8f" d="M0 3.6Q0 0.6 3 0.6H8.2Q9.8 0.6 10.9 1.6L12 2.6Q12.8 3.2 14 3.2H26Q29 3.2 29 6.2V20.6Q29 23.6 26 23.6H3Q0 23.6 0 20.6Z"/><rect x="0" y="8" width="29" height="2" fill="#fff"/></svg>
<div id="jb1" class="a t jb" style="left:763.40px;top:150.7px;letter-spacing:0.857px;">TodoList</div>
<svg class="a" style="left:862px;top:152px" width="8" height="20" viewBox="0 0 8 20" ><path d="M1.7 1.5L5.6 9.6L1.7 17.7" fill="none" stroke="#808080" stroke-width="2.5" stroke-linecap="butt" stroke-linejoin="miter"/></svg>
<svg class="a" style="left:887px;top:150px" width="25" height="20" viewBox="0 0 29 24" preserveAspectRatio="none"><path fill="#868a8f" d="M0 3.6Q0 0.6 3 0.6H8.2Q9.8 0.6 10.9 1.6L12 2.6Q12.8 3.2 14 3.2H26Q29 3.2 29 6.2V20.6Q29 23.6 26 23.6H3Q0 23.6 0 20.6Z"/><rect x="0" y="8" width="29" height="2" fill="#fff"/></svg>
<div id="jb2" class="a t jb" style="left:925.00px;top:150.7px;letter-spacing:0.500px;">Views</div>
<svg class="a" style="left:996px;top:152px" width="8" height="20" viewBox="0 0 8 20" ><path d="M1.7 1.5L5.6 9.6L1.7 17.7" fill="none" stroke="#808080" stroke-width="2.5" stroke-linecap="butt" stroke-linejoin="miter"/></svg>
<svg class="a" style="left:1022px;top:150.5px;opacity:1" width="24" height="20" viewBox="2.35 3.3 18.4 16.7" preserveAspectRatio="none"><path fill="#f0743f" d="M13.543 3.41c4.114 2.47 6.545 7.162 5.549 11.131-.024.093-.05.181-.076.272l.002.001c2.062 2.538 1.5 5.258 1.236 4.745-1.072-2.086-3.066-1.568-4.088-1.043a6.803 6.803 0 0 1-.281.158l-.02.012-.002.002c-2.115 1.123-4.957 1.205-7.812-.022a12.568 12.568 0 0 1-5.64-4.838c.649.48 1.35.902 2.097 1.252 3.019 1.414 6.051 1.311 8.197-.002C9.651 12.73 7.101 9.67 5.146 7.191a10.628 10.628 0 0 1-1.005-1.384c2.34 2.142 6.038 4.83 7.365 5.576C8.69 8.408 6.208 4.743 6.324 4.86c4.436 4.47 8.528 6.996 8.528 6.996.154.085.27.154.36.213.085-.215.16-.437.224-.668.708-2.588-.09-5.548-1.893-7.992z"/></svg>
<div id="jb3" class="a t jb" style="left:1058.50px;top:150.7px;letter-spacing:0.540px;">NewItemView</div>
<svg class="a" style="left:1210.5px;top:152px" width="8" height="20" viewBox="0 0 8 20" ><path d="M1.7 1.5L5.6 9.6L1.7 17.7" fill="none" stroke="#808080" stroke-width="2.5" stroke-linecap="butt" stroke-linejoin="miter"/></svg>
<div class="a" style="left:1234.5px;top:146px;width:27.5px;height:27.5px;border-radius:6px;background:#4fb6d2"></div>
<div id="jbP" class="a t " style="left:1241.00px;top:150px;font-size:21px;font-weight:bold;color:#fff">P</div>
<div id="jb4" class="a t jb" style="left:1272.40px;top:150.7px;letter-spacing:1.000px;">body</div>
<div class="a" style="left:2994px;top:190px;width:30px;height:1642px;background:#fafafa;border-left:1.5px solid #e8e8e8;border-right:1.5px solid #ececec"></div>
<div class="a" style="left:3002px;top:567px;width:16px;height:569px;border-radius:8px;background:#7f7f7f"></div>
<div class="a" style="left:690px;top:993px;width:2304px;height:44px;background:#b9d7fb"></div>
<div class="a" style="left:652px;top:232px;width:14px;height:57px;background:#e8e8e8;border-radius:0px 0px 0px 0px;"></div><div class="a" style="left:652px;top:289px;width:14px;height:44px;background:#e8e8e8"></div><div class="a" style="left:652px;top:290px;width:14px;height:43px;background:#d4d4d4;border-radius:7px 7px 0px 0px;box-shadow:0 -1.5px 0 0 rgba(255,255,255,.55);"></div><div class="a" style="left:652px;top:333px;width:14px;height:44px;background:#d4d4d4"></div><div class="a" style="left:652px;top:334px;width:14px;height:43px;background:#c1c1c1;border-radius:7px 7px 0px 0px;box-shadow:0 -1.5px 0 0 rgba(255,255,255,.55);"></div><div class="a" style="left:652px;top:377px;width:14px;height:44px;background:#c1c1c1"></div><div class="a" style="left:652px;top:378px;width:14px;height:43px;background:#aeaeae;border-radius:7px 7px 0px 0px;box-shadow:0 -1.5px 0 0 rgba(255,255,255,.55);"></div><div class="a" style="left:652px;top:421px;width:14px;height:132px;background:#aeaeae"></div><div class="a" style="left:652px;top:422px;width:14px;height:131px;background:#9f9f9f;border-radius:7px 7px 0px 0px;box-shadow:0 -1.5px 0 0 rgba(255,255,255,.55);"></div><div class="a" style="left:652px;top:553px;width:14px;height:264px;background:#9f9f9f"></div><div class="a" style="left:652px;top:554px;width:14px;height:261px;background:#909090;border-radius:7px 7px 7px 7px;box-shadow:0 -1.5px 0 0 rgba(255,255,255,.55),0 1.5px 0 0 rgba(255,255,255,.55);"></div><div class="a" style="left:652px;top:817px;width:14px;height:132px;background:#aeaeae"></div><div class="a" style="left:652px;top:817px;width:14px;height:130px;background:#9f9f9f;border-radius:0px 0px 7px 7px;box-shadow:0 1.5px 0 0 rgba(255,255,255,.55);"></div><div class="a" style="left:652px;top:949px;width:14px;height:132px;background:#c1c1c1"></div><div class="a" style="left:652px;top:949px;width:14px;height:130px;background:#aeaeae;border-radius:0px 0px 7px 7px;box-shadow:0 1.5px 0 0 rgba(255,255,255,.55);"></div><div class="a" style="left:652px;top:1081px;width:14px;height:44px;background:#c1c1c1;border-radius:0px 0px 0px 0px;"></div><div class="a" style="left:652px;top:1125px;width:14px;height:44px;background:#c1c1c1"></div><div class="a" style="left:652px;top:1126px;width:14px;height:43px;background:#aeaeae;border-radius:7px 7px 0px 0px;box-shadow:0 -1.5px 0 0 rgba(255,255,255,.55);"></div><div class="a" style="left:652px;top:1169px;width:14px;height:44px;background:#aeaeae"></div><div class="a" style="left:652px;top:1170px;width:14px;height:43px;background:#9f9f9f;border-radius:7px 7px 0px 0px;box-shadow:0 -1.5px 0 0 rgba(255,255,255,.55);"></div><div class="a" style="left:652px;top:1213px;width:14px;height:264px;background:#9f9f9f"></div><div class="a" style="left:652px;top:1214px;width:14px;height:261px;background:#909090;border-radius:7px 7px 7px 7px;box-shadow:0 -1.5px 0 0 rgba(255,255,255,.55),0 1.5px 0 0 rgba(255,255,255,.55);"></div><div class="a" style="left:652px;top:1477px;width:14px;height:88px;background:#aeaeae"></div><div class="a" style="left:652px;top:1477px;width:14px;height:86px;background:#9f9f9f;border-radius:0px 0px 7px 7px;box-shadow:0 1.5px 0 0 rgba(255,255,255,.55);"></div><div class="a" style="left:652px;top:1565px;width:14px;height:44px;background:#c1c1c1"></div><div class="a" style="left:652px;top:1565px;width:14px;height:42px;background:#aeaeae;border-radius:0px 0px 7px 7px;box-shadow:0 1.5px 0 0 rgba(255,255,255,.55);"></div><div class="a" style="left:652px;top:1609px;width:14px;height:44px;background:#c1c1c1;border-radius:0px 0px 0px 0px;"></div><div class="a" style="left:652px;top:1653px;width:14px;height:88px;background:#c1c1c1"></div><div class="a" style="left:652px;top:1654px;width:14px;height:87px;background:#aeaeae;border-radius:7px 7px 0px 0px;box-shadow:0 -1.5px 0 0 rgba(255,255,255,.55);"></div><div class="a" style="left:652px;top:1741px;width:14px;height:44px;background:#aeaeae"></div><div class="a" style="left:652px;top:1742px;width:14px;height:43px;background:#9f9f9f;border-radius:7px 7px 0px 0px;box-shadow:0 -1.5px 0 0 rgba(255,255,255,.55);"></div><div class="a" style="left:652px;top:1785px;width:14px;height:47px;background:#9f9f9f"></div><div class="a" style="left:652px;top:1786px;width:14px;height:46px;background:#909090;border-radius:7px 7px 0px 0px;box-shadow:0 -1.5px 0 0 rgba(255,255,255,.55);"></div>
<div class="a" style="left:652px;top:1323px;width:14px;height:2px;background:rgba(255,255,255,.6)"></div>
<div class="a" style="left:560px;top:1609px;width:10px;height:233px;border-radius:5px;background:#aecbfa;border:2px solid #2a6df4"></div>
<div class="a t ln" style="top:245.60px">30</div>
<div class="a t code" id="L30" style="top:249.00px">    <span class="c">// </span><span class="m">MARK: Computed properties</span></div>
<div class="a t ln" style="top:289.60px">31</div>
<div class="a t code" id="L31" style="top:293.00px">    <span class="k">var</span> <span class="d">body</span>: <span class="k">some</span> <span class="s">View</span> {</div>
<div class="a t ln" style="top:333.60px">32</div>
<div class="a t code" id="L32" style="top:337.00px">        <span class="s">NavigationView</span> {</div>
<div class="a t ln" style="top:377.60px">33</div>
<div class="a t code" id="L33" style="top:381.00px">            <span class="s">VStack</span> {</div>
<div class="a t ln" style="top:421.60px">34</div>
<div class="a t code" id="L34" style="top:425.00px">                <span class="s">HStack</span> {</div>
<div class="a t ln" style="top:465.60px">35</div>
<div class="a t code" id="L35" style="top:469.00px">                    <span class="s">TextField</span>(<span class="st">&quot;Enter a to-do item&quot;</span>, <span class="f">text</span>: <span class="p">$newItemDescription</span>)</div>
<div class="a t ln" style="top:509.60px">36</div>
<div class="a t ln" style="top:553.60px">37</div>
<div class="a t code" id="L37" style="top:557.00px">                    <span class="s">Button</span>(<span class="st">&quot;ADD&quot;</span>) {</div>
<div class="a t ln" style="top:597.60px">38</div>
<div class="a t code" id="L38" style="top:601.00px">                        <span class="c">// Add the new to-do item</span></div>
<div class="a t ln" style="top:641.60px">39</div>
<div class="a t code" id="L39" style="top:645.00px">                        <span class="p">viewModel</span>.<span class="p">createToDo</span>(<span class="p">withTitle</span>: <span class="p">newItemDescription</span>)</div>
<div class="a t ln" style="top:685.60px">40</div>
<div class="a t code" id="L40" style="top:689.00px">                        <span class="c">// Clear the input field</span></div>
<div class="a t ln" style="top:729.60px">41</div>
<div class="a t code" id="L41" style="top:733.00px">                        <span class="p">newItemDescription</span> = <span class="st">&quot;&quot;</span></div>
<div class="a t ln" style="top:773.60px">42</div>
<div class="a t code" id="L42" style="top:777.00px">                    }</div>
<div class="a t ln" style="top:817.60px">43</div>
<div class="a t code" id="L43" style="top:821.00px">                    .<span class="f">font</span>(.<span class="f">caption</span>)</div>
<div class="a t ln" style="top:861.60px">44</div>
<div class="a t code" id="L44" style="top:865.00px">                    .<span class="f">disabled</span>(<span class="p">newItemDescription</span>.<span class="f">trimmingCharacters</span>(<span class="f">in</span>: .<span class="f">whitespaces</span>).<span class="f">isEmpty</span> == <span class="k">true</span>)</div>
<div class="a t ln" style="top:905.60px">45</div>
<div class="a t code" id="L45" style="top:909.00px">                }</div>
<div class="a t ln" style="top:949.60px">46</div>
<div class="a t ln" style="top:993.60px;color:#1c1c1c;font-weight:bold;font-size:31px;-webkit-text-stroke:0">47</div>
<div class="a t code" id="L47" style="top:997.00px">                <span class="s">Spacer</span>()</div>
<div class="a t ln" style="top:1037.60px">48</div>
<div class="a t code" id="L48" style="top:1041.00px">            }</div>
<div class="a t ln" style="top:1081.60px">49</div>
<div class="a t code" id="L49" style="top:1085.00px">            .<span class="f">padding</span>(<span class="n">20</span>)</div>
<div class="a t ln" style="top:1125.60px">50</div>
<div class="a t code" id="L50" style="top:1129.00px">            .<span class="f">toolbar</span> {</div>
<div class="a t ln" style="top:1169.60px">51</div>
<div class="a t code" id="L51" style="top:1173.00px">                <span class="s">ToolbarItem</span>(<span class="f">placement</span>: .<span class="f">automatic</span>) {</div>
<div class="a t ln" style="top:1213.60px">52</div>
<div class="a t code" id="L52" style="top:1217.00px">                    <span class="s">Button</span> {</div>
<div class="a t ln" style="top:1257.60px">53</div>
<div class="a t code" id="L53" style="top:1261.00px">                        <span class="p">showSheet</span> = <span class="k">false</span></div>
<div class="a t ln" style="top:1301.60px">54</div>
<div class="a t code" id="L54" style="top:1305.00px">                    } <span class="f">label</span>: {</div>
<div class="a t ln" style="top:1345.60px">55</div>
<div class="a t code" id="L55" style="top:1349.00px">                        <span class="s">Text</span>(<span class="st">&quot;Done&quot;</span>)</div>
<div class="a t ln" style="top:1389.60px">56</div>
<div class="a t code" id="L56" style="top:1393.00px">                            .<span class="f">bold</span>()</div>
<div class="a t ln" style="top:1433.60px">57</div>
<div class="a t code" id="L57" style="top:1437.00px">                    }</div>
<div class="a t ln" style="top:1477.60px">58</div>
<div class="a t ln" style="top:1521.60px">59</div>
<div class="a t code" id="L59" style="top:1525.00px">                }</div>
<div class="a t ln" style="top:1565.60px">60</div>
<div class="a t code" id="L60" style="top:1569.00px">            }</div>
<div class="a t ln" style="top:1609.60px">61</div>
<div class="a t code" id="L61" style="top:1613.00px">            <span class="c">// This block of code is invoked whenever the selection from the picker changes</span></div>
<div class="a t ln" style="top:1653.60px">62</div>
<div class="a t code" id="L62" style="top:1657.00px">            .<span class="f">onChange</span>(<span class="f">of</span>: <span class="p">selectionResult</span>) {</div>
<div class="a t ln" style="top:1697.60px">63</div>
<div class="a t code" id="L63" style="top:1701.00px">                <span class="c">// When the selection result is not nil...</span></div>
<div class="a t ln" style="top:1741.60px">64</div>
<div class="a t code" id="L64" style="top:1745.00px">                <span class="k">if</span> <span class="k">let</span> imageSelection = <span class="p">selectionResult</span> {</div>
<div class="a t ln" style="top:1785.60px">65</div>
<div class="a t code" id="L65" style="top:1789.00px">                    <span class="c">// ... transfer the data from the selection result into</span></div>
<div class="a" style="left:546px;top:1832px;width:2478px;height:56px;background:#fff"></div>
<div class="a hl" style="left:546px;top:1832px;width:2478px"></div>
<svg class="a" style="left:569px;top:1851px" width="31" height="20" viewBox="0 0 31 20" ><path d="M3 0.6H21.6Q23.6 0.6 24.6 2.2L28.6 8.6Q29.4 9.8 28.6 11L24.6 17.4Q23.6 19 21.6 19H3Q0.4 19 0.4 16.4V3.2Q0.4 0.6 3 0.6Z" fill="#3478f6"/></svg>
<div id="nline" class="a t " style="left:2879.40px;top:1850.8px;letter-spacing:0.160px;font-size:23.5px;color:#808080">1 line</div>
<div class="a" style="left:2954px;top:1849px;width:2px;height:23px;background:#e2e2e2"></div>
<svg class="a" style="left:2972px;top:1847px" width="28" height="28" viewBox="0 0 28 28" ><rect x="2.4" y="2.4" width="23" height="23" rx="5" fill="none" stroke="#7a7a7a" stroke-width="2.2"/><rect x="5.8" y="16.6" width="16.4" height="5.6" rx="1.8" fill="#7a7a7a"/></svg>
<div class="a" style="left:546px;top:234px;width:2448px;height:16px;background:linear-gradient(rgba(0,0,0,.075),rgba(0,0,0,.025) 45%,rgba(0,0,0,0))"></div>
<div class="a" style="left:546px;top:190px;width:2448px;height:44.5px;background:#f2f2f2;border-bottom:2px solid #d9d9d9"></div>
<div class="a t ln" style="top:188.6px;left:557px">11</div>
<div class="a t code" id="L11" style="top:194px"><span class="k">struct</span> <span class="ty">NewItemView</span>: <span class="s">View</span> {</div>
</div></body></html>
